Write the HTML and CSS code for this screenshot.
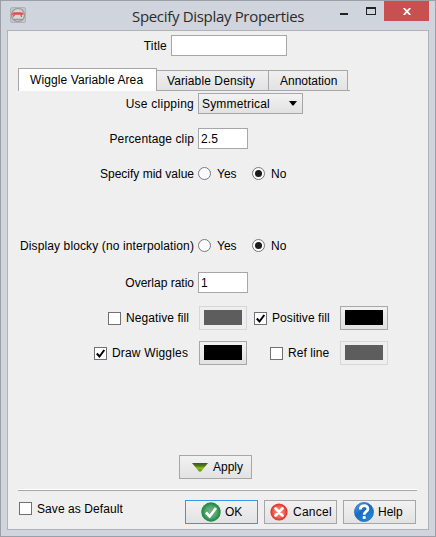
FILE: index.html
```html
<!DOCTYPE html>
<html lang="en">
<head>
<meta charset="utf-8">
<title>Specify Display Properties</title>
<link rel="stylesheet" href="styles.css">
</head>
<body>
<div class="window">
  <header class="titlebar">
    <svg class="app-icon" width="16" height="16" viewBox="0 0 16 16"><rect x=".5" y=".5" width="15" height="15" rx="1.5" fill="#c3c5c7" stroke="#b0b2b5"/><circle cx="8" cy="8" r="6.5" fill="#d5d6d6" stroke="#949698" stroke-width="1.2"/><path d="M4 12.500h8" stroke="#999" stroke-width="1.500"/><path d="M2 7.500l2-1.500h6l3 .5M3.500 7h10M5 7l-2 2.500M11 7l.5 3" fill="none" stroke="#e64b48" stroke-width="1.3"/></svg>
    <h1 class="caption">Specify Display Properties</h1>
    <div class="controls">
      <svg class="min" width="8" height="2"><rect width="8" height="2" fill="#222"/></svg>
      <svg class="max" width="10" height="8"><path d="M0 0h10v8H0zM1 2v5h8V2z" fill="#222" fill-rule="evenodd"/></svg>
      <div class="close"><svg width="8" height="7" viewBox="0 0 8 7"><path d="M.7 0l6.6 7M7.3 0L.7 7" stroke="#fff" stroke-width="1.8"/></svg></div>
    </div>
  </header>
  <main class="panel">
    <div class="title-row"><span class="t-title">Title</span><div class="input wide"></div></div>
    <nav class="tabs">
      <div class="tab active"><span class="t-wva">Wiggle Variable Area</span></div>
      <div class="tab density"><span class="t-density">Variable Density</span></div>
      <div class="tab annotation"><span class="t-annotation">Annotation</span></div>
      <div class="tab-end"></div>
    </nav>
    <section class="fields">
      <div class="field"><label><span class="t-clip">Use clipping</span></label><div class="select"><span class="t-sym">Symmetrical</span><svg width="8" height="5"><path d="M0 0h8L4.500 4.500h-1z" fill="#000"/></svg></div></div>
      <div class="field"><label><span class="t-pct">Percentage clip</span></label><div class="input">2.5</div></div>
      <div class="field"><label><span class="t-mid">Specify mid value</span></label><div class="radios"><i class="radio"></i><span class="yes">Yes</span><i class="radio on"></i><span class="no">No</span></div></div>
      <div class="field blocky"><label><span class="t-blocky">Display blocky (no interpolation)</span></label><div class="radios"><i class="radio"></i><span class="yes">Yes</span><i class="radio on"></i><span class="no">No</span></div></div>
      <div class="field overlap"><label><span class="t-overlap">Overlap ratio</span></label><div class="input">1</div></div>
    </section>
    <section class="fills">
      <div class="check neg"><i class="box"></i><span class="t-neg">Negative fill</span></div>
      <div class="swatch disabled"><i></i></div>
      <div class="check pos"><i class="box"><svg width="11" height="11"><path d="M1.800 5.500l2.700 3L9.300 2" fill="none" stroke="#000" stroke-width="2"/></svg></i><span class="t-pos">Positive fill</span></div>
      <div class="swatch"><i></i></div>
      <div class="check draw"><i class="box"><svg width="11" height="11"><path d="M1.800 5.500l2.700 3L9.300 2" fill="none" stroke="#000" stroke-width="2"/></svg></i><span class="t-draw">Draw Wiggles</span></div>
      <div class="swatch"><i></i></div>
      <div class="check ref"><i class="box"></i><span class="t-ref">Ref line</span></div>
      <div class="swatch disabled"><i></i></div>
    </section>
    <div class="button apply"><svg width="16" height="9" viewBox="0 0 16 9"><defs><linearGradient id="ag" x2="0" y2="1"><stop stop-color="#38551e"/><stop offset=".35" stop-color="#527b16"/><stop offset=".6" stop-color="#8cc21a"/><stop offset="1" stop-color="#55910f"/></linearGradient></defs><path d="M0 0h16L9 8.500H7z" fill="url(#ag)"/></svg><span class="t-apply">Apply</span></div>
    <div class="separator"></div>
    <footer class="footer">
      <div class="check save"><i class="box"></i><span class="t-save">Save as Default</span></div>
      <div class="button ok"><svg width="20" height="20" viewBox="0 0 20 20"><defs><radialGradient id="og" cx=".5" cy=".5" r=".5"><stop stop-color="#7cb48c"/><stop offset=".6" stop-color="#54a36e"/><stop offset=".85" stop-color="#259348"/><stop offset="1" stop-color="#238442"/></radialGradient></defs><circle cx="10" cy="10" r="9.700" fill="url(#og)"/><path d="M5 10.500l3.700 4L15 6" fill="none" stroke="#fff" stroke-width="2.600"/></svg><span class="t-ok">OK</span></div>
      <div class="button cancel"><svg width="18" height="18" viewBox="0 0 18 18"><defs><radialGradient id="cg"><stop stop-color="#ff8b7c"/><stop offset=".6" stop-color="#f56658"/><stop offset="1" stop-color="#db2d24"/></radialGradient></defs><circle cx="9" cy="9" r="8.600" fill="url(#cg)"/><path d="M5.600 5.600l6.800 6.800M12.400 5.600l-6.800 6.800" stroke="#fff" stroke-width="2.800" stroke-linecap="round"/></svg><span class="t-cancel">Cancel</span></div>
      <div class="button help"><svg width="20" height="20" viewBox="0 0 20 20"><defs><linearGradient id="hg" x2=".7" y2="1"><stop stop-color="#69a9df"/><stop offset=".5" stop-color="#176bc0"/><stop offset="1" stop-color="#2088dc"/></linearGradient></defs><circle cx="10" cy="10" r="9.500" fill="url(#hg)" stroke="#2665ad" stroke-width=".8"/><path d="M6.300 7.500c0-5 7.600-4.900 7.600-.6 0 3-3.700 2.700-3.700 5.800" fill="none" stroke="#fff" stroke-width="2.800"/><rect x="8.700" y="14" width="3" height="3" rx=".8" fill="#fff"/></svg><span class="t-help">Help</span></div>
    </footer>
  </main>
</div>
</body>
</html>
```
FILE: styles.css
```css
* { box-sizing: border-box; }
body { margin: 0; font: 12px/14px "Liberation Sans", Arial, sans-serif; color: #000; }
svg { display: block; flex: none; }
span { white-space: nowrap; }
.window { width: 436px; height: 537px; padding: 0 6px 6px; border: 1px solid #9c9fa6; background: #d0d4dc; }
.titlebar { display: flex; height: 29px; padding-left: 3px; }
.app-icon { margin-top: 6px; }
.caption { width: 210px; margin: 5px 0 0 106px; font: 15px/20px "Open Sans", "Noto Sans", sans-serif; letter-spacing: -0.32px; color: #2b2b2b; white-space: nowrap; }
.controls { display: flex; margin-left: -2px; }
.min { margin: 12px 0 0 0; }
.max { margin: 6px 0 0 18px; }
.close { display: flex; align-items: center; justify-content: center; width: 45px; height: 20px; margin-left: 8px; background: #c75050; }
.panel { width: 422px; height: 500px; border: 1px solid #b0b2b8; background: #efefef; }
.title-row { display: flex; align-items: center; justify-content: flex-end; gap: 4px; width: 279px; margin-top: 4px; }
.input { width: 50px; height: 21px; padding: 3px 2px; border: 1px solid #a6a7ab; background: #fff; letter-spacing: 0.1px; }
.input.wide { width: 116px; }
.tabs { display: flex; align-items: flex-end; height: 23px; margin: 12px 0 0 10px; }
.tab { display: flex; align-items: center; height: 21px; border: 1px solid #a6a7ab; border-left-width: 0; background: linear-gradient(#f0f0f0, #e2e2e2); }
.tab.active { width: 139px; height: 23px; padding-left: 11px; border-left-width: 1px; border-bottom: 0; background: #fff; }
.density { width: 112px; padding-left: 10px; }
.annotation { width: 79px; padding-left: 11px; }
.tab-end { width: 2px; height: 1px; background: #a6a7ab; }
.t-title { letter-spacing: 0.2px; }
.t-wva, .t-density { letter-spacing: 0.1px; }
.t-clip { letter-spacing: 0.25px; }
.t-sym, .t-draw { letter-spacing: 0.17px; }
.t-pct, .t-blocky { letter-spacing: 0.12px; }
.t-neg, .t-pos, .t-save, .t-ref { letter-spacing: 0.08px; }
.t-cancel { letter-spacing: 0.25px; }
.fields { margin-top: 2px; }
.field { display: grid; grid-template-columns: 186px auto; column-gap: 4px; align-items: center; height: 21px; margin-bottom: 14px; }
.field label { display: flex; justify-content: flex-end; }
.blocky { margin-top: 51px; margin-bottom: 16px; }
.overlap { margin-bottom: 0; }
.select { display: flex; align-items: center; justify-content: space-between; width: 105px; height: 21px; padding: 0 5px 0 3px; border: 1px solid #a6a7ab; background: linear-gradient(#f2f2f2, #e2e2e2); }
.select svg { margin-top: -1px; }
.radios { display: flex; align-items: center; }
.radio { display: flex; align-items: center; justify-content: center; width: 13px; height: 13px; border: 1px solid #77787b; border-radius: 50%; background: #fff; }
.radio.on::after { content: ""; width: 7px; height: 7px; border-radius: 50%; background: #1c1c1c; }
.yes { width: 35px; margin-left: 6px; }
.no { margin-left: 6px; }
.fills { display: grid; grid-template-columns: 181px 48px 73px 48px; grid-template-rows: 24px 24px; column-gap: 10px; row-gap: 11px; margin: 13px 0 0; }
.check { display: flex; align-items: center; gap: 5px; }
.neg { padding-left: 100px; }
.draw { padding-left: 86px; }
.pos { margin-left: -3px; }
.ref { margin-left: 13px; }
.box { flex: none; width: 13px; height: 13px; border: 1px solid #707174; background: #fff; }
.swatch { padding: 3px 4px; border: 1px solid #a6a7ab; background: linear-gradient(#f1f1f1, #e1e1e1); }
.swatch i { display: block; width: 38px; height: 15px; background: #000; }
.swatch.disabled { border-color: #d6d7d8; background: #eee; }
.disabled i { background: #5d5d5d; }
.button { display: flex; align-items: center; width: 73px; height: 24px; border: 1px solid #a6a7ab; background: linear-gradient(#f2f2f2, #e2e2e2); }
.apply { gap: 5px; margin: 90px 0 0 171px; padding-left: 12px; }
.separator { width: 399px; height: 2px; margin: 10px 0 0 10px; border-top: 1px solid #fff; border-bottom: 1px solid #a6a7ab; }
.footer { display: flex; gap: 6px; margin: 9px 0 0 11px; }
.save { width: 160px; height: 17px; }
.ok { gap: 4px; padding-left: 15px; border-color: #3399ef; }
.cancel { gap: 5px; padding-left: 5px; }
.help { gap: 4px; padding-left: 10px; }
```
